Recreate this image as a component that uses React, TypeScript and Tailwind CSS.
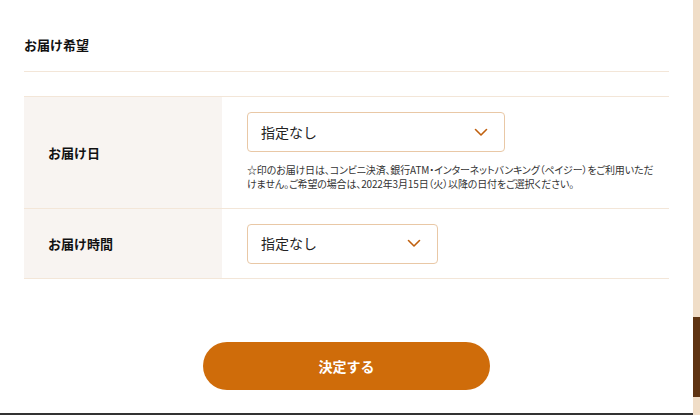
import React from "react";

function Chevron() {
  return (
    <svg width="14" height="9" viewBox="0 0 14 9" fill="none">
      <path d="M1.5 1.5 L7 7 L12.5 1.5" stroke="#c0600e" strokeWidth="1.6" strokeLinecap="round" strokeLinejoin="round" />
    </svg>
  );
}

function Select({ w }: { w: string }) {
  return (
    <div className={`${w} h-[40px] flex items-center justify-between pl-[13px] pr-[16px] border border-[#e9c8a6] rounded-[4px] bg-white`}>
      <span className="text-[14px] text-[#222]">指定なし</span>
      <Chevron />
    </div>
  );
}

export default function App() {
  return (
    <div
      className="w-[700px] h-[415px] flex bg-white overflow-hidden"
      style={{ fontFamily: '"Noto Sans CJK JP", "Noto Sans", sans-serif' }}
    >
      <div className="w-[693px] h-[415px] flex flex-col">
        <div className="flex-1 px-[24px]">
          <div className="pt-[35px] h-[72px] border-b border-[#f3e6d8]">
            <h2 className="text-[13px] font-bold text-[#111] leading-[20px]">お届け希望</h2>
          </div>
          <div className="mt-[24px] border-t border-[#f3e6d8]">
            <div className="flex border-b border-[#f3e6d8] h-[112px]">
              <div className="w-[198px] bg-[#f8f4f1] flex items-center pl-[24px]">
                <span className="text-[13px] font-bold text-[#111]">お届け日</span>
              </div>
              <div className="flex-1 pl-[25px] pt-[15px]">
                <Select w="w-[258px]" />
                <p className="mt-[11px] text-[10px] leading-[14px] text-[#333] whitespace-nowrap tracking-[-0.15px] [font-feature-settings:'palt']">
                  ☆印のお届け日は、コンビニ決済、銀行ATM・インターネットバンキング（ペイジー）をご利用いただ
                  <br />
                  けません。ご希望の場合は、2022年3月15日（火）以降の日付をご選択ください。
                </p>
              </div>
            </div>
            <div className="flex border-b border-[#f3e6d8] h-[70px]">
              <div className="w-[198px] bg-[#f8f4f1] flex items-center pl-[24px]">
                <span className="text-[13px] font-bold text-[#111]">お届け時間</span>
              </div>
              <div className="flex-1 pl-[25px] flex items-center">
                <Select w="w-[191px]" />
              </div>
            </div>
          </div>
          <div className="flex justify-center mt-[63px]">
            <button className="w-[287px] h-[48px] rounded-full bg-[#cf6c0a] text-white text-[14px] font-bold">
              決定する
            </button>
          </div>
        </div>
        <div className="h-[2px] bg-[#333]" />
      </div>
      <div className="w-[7px] h-[415px] bg-[#f0ddc7] flex flex-col">
        <div className="h-[317px]" />
        <div className="h-[80px] bg-[#5f3412]" />
      </div>
    </div>
  );
}
